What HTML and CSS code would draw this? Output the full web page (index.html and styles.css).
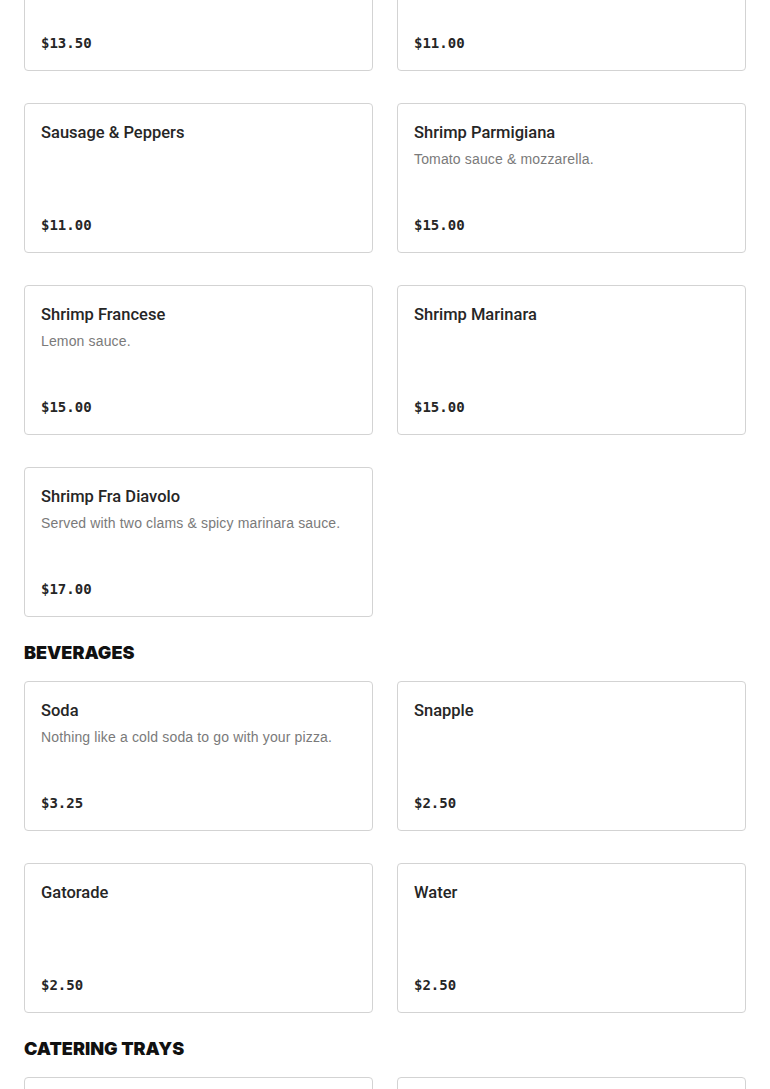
FILE: index.html
```html
<!DOCTYPE html>
<html lang="en">
<head>
<meta charset="utf-8">
<title>Menu</title>
<link rel="stylesheet" href="styles.css">
</head>
<body>
<main class="menu">
  <section class="section section-first">
    <div class="grid">
      <article class="card">
        <h3 class="item-name">Chicken Parmigiana</h3>
        <p class="price">$13.50</p>
      </article>
      <article class="card">
        <h3 class="item-name">Sausage Parmigiana</h3>
        <p class="price">$11.00</p>
      </article>
      <article class="card">
        <h3 class="item-name">Sausage &amp; Peppers</h3>
        <p class="price">$11.00</p>
      </article>
      <article class="card">
        <h3 class="item-name">Shrimp Parmigiana</h3>
        <p class="desc">Tomato sauce &amp; mozzarella.</p>
        <p class="price">$15.00</p>
      </article>
      <article class="card">
        <h3 class="item-name">Shrimp Francese</h3>
        <p class="desc">Lemon sauce.</p>
        <p class="price">$15.00</p>
      </article>
      <article class="card">
        <h3 class="item-name">Shrimp Marinara</h3>
        <p class="price">$15.00</p>
      </article>
      <article class="card">
        <h3 class="item-name">Shrimp Fra Diavolo</h3>
        <p class="desc">Served with two clams &amp; spicy marinara sauce.</p>
        <p class="price">$17.00</p>
      </article>
    </div>
  </section>

  <section class="section">
    <h2 class="section-title">BEVERAGES</h2>
    <div class="grid">
      <article class="card">
        <h3 class="item-name">Soda</h3>
        <p class="desc">Nothing like a cold soda to go with your pizza.</p>
        <p class="price">$3.25</p>
      </article>
      <article class="card">
        <h3 class="item-name">Snapple</h3>
        <p class="price">$2.50</p>
      </article>
      <article class="card">
        <h3 class="item-name">Gatorade</h3>
        <p class="price">$2.50</p>
      </article>
      <article class="card">
        <h3 class="item-name">Water</h3>
        <p class="price">$2.50</p>
      </article>
    </div>
  </section>

  <section class="section">
    <h2 class="section-title">CATERING TRAYS</h2>
    <div class="grid">
      <article class="card">
        <h3 class="item-name">Baked Ziti Tray</h3>
        <p class="price">$45.00</p>
      </article>
      <article class="card">
        <h3 class="item-name">Penne Vodka Tray</h3>
        <p class="price">$50.00</p>
      </article>
    </div>
  </section>
</main>
</body>
</html>
```

FILE: styles.css
```css
* { box-sizing: border-box; }

html, body {
  margin: 0;
  padding: 0;
  background: #ffffff;
  overflow: hidden;
}

body {
  font-family: "Liberation Sans", Arial, sans-serif;
  color: #222222;
}

.menu {
  padding: 0 24px;
  margin-top: -79px;
}

.section {
  margin-bottom: 24px;
}

.section-title {
  margin: 0 0 16px;
  font-family: Inter, "Liberation Sans", sans-serif;
  font-weight: 900;
  font-size: 18px;
  line-height: 24px;
  letter-spacing: 0;
  color: #111111;
}

.grid {
  display: grid;
  grid-template-columns: 1fr 1fr;
  column-gap: 24px;
  row-gap: 32px;
}

.card {
  display: flex;
  flex-direction: column;
  min-height: 150px;
  padding: 16px;
  border: 1px solid #d3d3d3;
  border-radius: 4px;
  background: #ffffff;
}

.item-name {
  margin: 0;
  font-family: Roboto, "Liberation Sans", sans-serif;
  font-size: 16.5px;
  line-height: 26px;
  font-weight: 500;
  color: #262626;
}

.desc {
  margin: 3px 0 0;
  font-size: 14px;
  line-height: 20px;
  letter-spacing: 0.15px;
  color: #7a7a7a;
}

.price {
  margin: auto 0 1px;
  font-family: "DejaVu Sans Mono", "Liberation Mono", monospace;
  font-weight: bold;
  font-size: 14px;
  line-height: 20px;
  color: #262626;
}
```
